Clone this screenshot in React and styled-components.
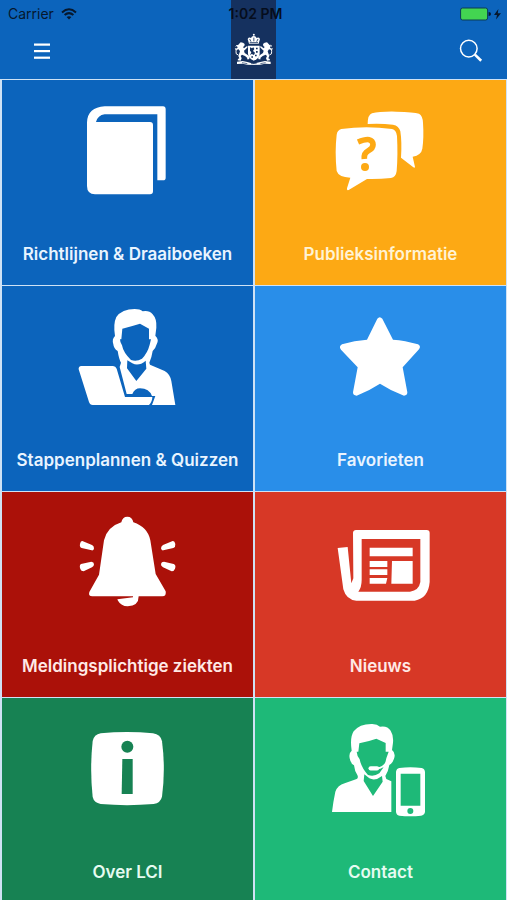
import React from "react";
import styled, { createGlobalStyle } from "styled-components";

const GlobalStyle = createGlobalStyle`
  *, *::before, *::after { box-sizing: border-box; }
  body {
    margin: 0;
    background: #cfe2f5;
    font-family: Inter, Roboto, "Liberation Sans", sans-serif;
  }
`;

const Page = styled.div`
  display: flex;
  flex-direction: column;
  min-height: 100vh;
`;

const Header = styled.header`
  display: grid;
  grid-template-columns: minmax(0, 1fr) 45px minmax(0, 1fr);
  grid-template-rows: 27px 52px;
  align-items: center;
  background: #0c64bc;
  color: #06182e;
`;

const Ribbon = styled.div`
  grid-column: 2;
  grid-row: 1 / 3;
  align-self: stretch;
  display: flex;
  align-items: flex-end;
  justify-content: center;
  padding-bottom: 13px;
  background: #15315f;
`;

const Carrier = styled.div`
  grid-column: 1;
  grid-row: 1;
  display: flex;
  align-items: center;
  gap: 7px;
  padding-left: 8px;
  font-size: 14px;
  line-height: 20px;
`;

const Time = styled.time`
  grid-column: 2;
  grid-row: 1;
  justify-self: center;
  padding-left: 4px;
  white-space: nowrap;
  font-size: 14px;
  font-weight: 600;
  line-height: 20px;
  color: #050d1c;
`;

const Battery = styled.div`
  grid-column: 3;
  grid-row: 1;
  justify-self: end;
  display: flex;
  padding-right: 5px;
`;

const BarButton = styled.button`
  grid-column: ${(p) => (p.$end ? 3 : 1)};
  grid-row: 2;
  align-self: start;
  justify-self: ${(p) => (p.$end ? "end" : "start")};
  display: flex;
  align-items: center;
  justify-content: center;
  width: 44px;
  height: 48px;
  margin: 0 ${(p) => (p.$end ? "14px" : "20px")};
  padding: 0;
  border: 0;
  background: transparent;
  color: #fff;
  cursor: pointer;
`;

const Tiles = styled.nav`
  flex: 1;
  display: grid;
  grid-template-columns: repeat(2, minmax(0, 1fr));
  grid-template-rows: repeat(3, 205px) minmax(202px, 1fr);
  gap: 1px 2px;
  padding: 1px 1px 0 2px;
`;

const Tile = styled.a`
  display: flex;
  flex-direction: column;
  align-items: center;
  gap: 37px;
  padding-top: 15px;
  background: ${(p) => p.$color};
  color: #fff;
  text-decoration: none;
`;

const TileIcon = styled.svg`
  width: 110px;
  height: 110px;
  flex: none;
  fill: #fff;
`;

const Label = styled.span`
  font-size: 17px;
  font-weight: 600;
  line-height: 24px;
  white-space: nowrap;
  color: ${(p) => p.$tint || "#e9f4ff"};
`;

const WifiIcon = () => (
  <svg width="16" height="12" viewBox="0 0 16 12" fill="none" stroke="currentColor" strokeWidth="2" aria-hidden="true">
    <path d="M1 4.4Q8-1.8 15 4.4" />
    <path d="M3.6 7.1Q8 3.2 12.4 7.1" />
    <path d="M8 11.6 5.6 9.1Q8 7.2 10.4 9.1Z" fill="currentColor" stroke="none" />
  </svg>
);

const BatteryIcon = () => (
  <svg width="42" height="14" viewBox="0 0 42 14" aria-label="Battery charging" role="img">
    <rect x="0.6" y="1" width="27" height="12" rx="2" fill="#43d551" stroke="#0b3c55" />
    <path d="M28.6 5Q31 5.2 31 7T28.6 9Z" fill="#06182e" />
    <path d="M38.4 2 34 8H37L36 12.5 41 6.2H37.8Z" fill="#06182e" />
  </svg>
);

const MenuIcon = () => (
  <svg width="16" height="17" viewBox="0 0 16 17" fill="currentColor" aria-hidden="true">
    <rect y="0.5" width="16" height="2.2" />
    <rect y="7" width="16" height="2.2" />
    <rect y="13.6" width="16" height="2.2" />
  </svg>
);

const SearchIcon = () => (
  <svg width="24" height="24" viewBox="0 0 24 24" fill="none" stroke="currentColor" aria-hidden="true">
    <circle cx="9.8" cy="9.6" r="8.3" strokeWidth="1.5" />
    <path d="m15.9 15.6 6.3 6.2" strokeWidth="2.6" />
  </svg>
);

const Lion = () => (
  <>
    <path d="M40 134l5-5 7 1 5 4-1 6-4 3 3 4 8-6 4 1-7 8-5 4 2 7 8 5 7 9-2 5h-6l1-4-7-6-9-4-4 4 3 7-3 7-9-1 1-4 4-2-3-7 3-8 2-6-4-6-7 2-3-3 7-4-2-4z" />
    <path d="M38 167q-9-2-7-10 2-5-2-10" fill="none" stroke="#fff" strokeWidth="3" />
    <path d="M43 142l-9-4-4 3M63 168l8 4" fill="none" stroke="#fff" strokeWidth="3" />
  </>
);

const CoatOfArms = () => (
  <svg width="40" height="33" viewBox="25 101 120 99" fill="#fff" role="img" aria-label="Rijksoverheid">
    <Lion />
    <g transform="translate(169 0) scale(-1 1)">
      <Lion />
    </g>
    <path d="M67 139h35v25q-2 14-17.500 20Q69 178 67 164z" />
    <path d="M73 144l6 3 4-3 3 5-4 6 6 5-3 7-7-3-5 4 4-9-4-5zM91 145h5v5h-5zM91 155h5v5h-5zM88 166h5v5h-5zM77 171h5v4h-5z" fill="#15315f" />
    <path d="M70 133l-4-14q4-7 10-3 2-6 8-6t9 6q6-4 10 3l-4 14z" />
    <path d="M72 119l4 8M84.500 115v11M97 119l-4 8M72 130h25" fill="none" stroke="#15315f" strokeWidth="2.500" />
    <circle cx="84.500" cy="106" r="3" />
    <path d="M34 187l17-2 14 3 19 5 20-5 14-3 17 2v7l-17-1-14 3-20 1-19-1-14-3-17 1z" />
    <path d="M49 190l16 3M120 190l-16 3M76 193h17" fill="none" stroke="#15315f" strokeWidth="2" />
  </svg>
);

const BookIcon = () => (
  <TileIcon viewBox="10 0 330 330" aria-hidden="true">
    <path d="M52 82Q54 37 105 34H280Q288 34 288 43V248Q288 256 280 256H263V58H105Q84 61 79 81H241Q250 81 250 90V289Q250 298 241 298H76Q52 297 52 273Z" />
  </TileIcon>
);

const QuestionIcon = () => (
  <TileIcon viewBox="4 -15 330 330" aria-hidden="true">
    <path d="M129 72Q129 44 142 40Q165 34 215 35Q268 36 283 41Q294 47 295 68Q298 112 293 146Q290 165 264 170L271 201Q270 205 266 202L229 173Q232 125 227 94Q223 77 205 74Q170 70 129 72Z" />
    <path d="M50 87Q125 76 202 87Q215 90 217 108Q220 165 216 213Q214 231 199 234Q162 238 127 237L72 270Q65 272 67 265L77 233Q42 232 36 213Q30 155 36 104Q38 90 50 87Z" />
    <path d="M100 126Q144 108 145 134Q145 145 131 152Q117 159 119 177" fill="none" stroke="#fda914" strokeWidth="17" />
    <circle cx="121" cy="201" r="12" fill="#fda914" />
  </TileIcon>
);

const LaptopIcon = () => (
  <TileIcon viewBox="10 3 330 330" aria-hidden="true">
    <path fillRule="evenodd" d="M136 108Q130 72 140 51Q157 27 195 27Q211 27 219 34Q238 30 249 43Q262 57 260 83L257 107Q269 118 261 133Q258 145 249 153Q246 173 239 188L241 194L285 213Q301 222 305 243L317 315H247L257 288H247Q239 266 211 265Q195 265 188 282H171L150 201L154 188Q148 178 144 153Q132 146 131 133Q126 117 136 108ZM158 86L155 118H151Q151 127 157 136Q161 158 184 180Q201 186 217 176Q234 158 240 134L244 118H238V86L211 71Q185 79 158 86ZM173 181L172 205L200 243L230 206L228 182Q207 200 188 190Z" />
    <path d="M35 198H130Q138 198 141 206L166 291H248Q248 305 238 315H69Q61 315 58 306L27 208Q26 199 35 198Z" />
  </TileIcon>
);

const StarIcon = () => (
  <TileIcon viewBox="-11 -12 330 330" aria-hidden="true">
    <path d="M143 41Q150 32 158 41L190 104Q226 106 265 118Q275 124 268 133L219 187L233 262Q233 272 223 272Q183 257 151 236Q119 257 81 272Q70 272 70 262L84 187L34 134Q26 125 37 118Q75 106 112 104Z" />
  </TileIcon>
);

const BellIcon = () => (
  <TileIcon viewBox="10 6 330 330" aria-hidden="true">
    <path d="M155 52Q158 35 173 35T191 52Q234 66 242 106L258 207L288 259Q291 274 278 274H207Q207 303 174 304Q154 303 145 287L143 283L190 277V274H68Q55 274 59 261L88 209L103 106Q113 65 155 52Z" />
    <path d="M38 108L67 120Q73 123 73 130Q73 137 66 136L36 129Q29 126 31 117Q33 107 38 108ZM34 177L65 170Q73 171 73 178Q73 184 67 187L42 199Q34 199 32 192Q28 181 34 177ZM309 108L280 120Q274 124 274 130Q275 137 281 136L311 129Q318 126 317 117Q315 107 309 108ZM312 177L283 170Q275 170 274 177Q273 183 280 187L306 199Q313 199 316 191Q320 181 312 177Z" />
  </TileIcon>
);

const NewsIcon = () => (
  <TileIcon viewBox="-11 -24 330 330" aria-hidden="true">
    <path fillRule="evenodd" d="M70 53Q71 45 79 45H291Q300 45 300 54V201Q296 250 255 257H80Q50 255 41 223L24 99L54 96L65 205L71 190ZM96 72V195Q96 217 86 230H241Q268 226 272 201V72Z" />
    <path d="M120 98H249V124H120ZM120 138H173V156H120ZM120 163H173V180H120ZM120 189H173L169 206H120ZM187 138H249V206H185Z" />
  </TileIcon>
);

const InfoIcon = () => (
  <TileIcon viewBox="-20 -20 330 330" aria-hidden="true">
    <path d="M63 41Q142 33 220 41Q243 44 247 65Q258 148 247 231Q243 249 222 253Q142 260 63 253Q43 249 39 232Q30 148 39 64Q43 45 63 41Z" />
    <circle cx="143" cy="81" r="18" fill="#178253" />
    <path d="M128 118H159V223H126Z" fill="#178253" />
  </TileIcon>
);

const ContactIcon = () => (
  <TileIcon viewBox="4 -6 330 330" aria-hidden="true">
    <path fillRule="evenodd" d="M81 107Q75 67 87 49Q105 26 143 27Q158 28 166 35Q188 31 198 47Q207 61 205 83L202 105Q214 114 208 131Q204 144 194 150Q191 169 182 183L185 192L200 199V291H22Q25 263 32 230Q39 211 60 205L96 192Q102 188 98 180Q90 169 88 151Q77 145 75 130Q72 114 81 107ZM104 85L101 110H96Q97 123 105 133Q110 158 130 180Q148 186 164 175Q180 157 185 130L192 110H183V84L155 71Q129 80 104 85ZM119 178L117 198L145 243L174 200L172 183Q152 199 134 190Z" />
    <path d="M138 160H157" fill="none" stroke="#fff" strokeWidth="13" strokeLinecap="round" />
    <path d="M157 160Q177 160 189 138" fill="none" stroke="#fff" strokeWidth="6" />
    <path fillRule="evenodd" d="M224 159Q257 154 291 159Q300 161 301 171V291Q299 301 289 302Q257 305 224 302Q215 300 214 291V171Q215 161 224 159ZM228 176V272H287V176Z" />
    <circle cx="257" cy="288" r="9" fill="#1eb978" />
  </TileIcon>
);

const tiles = [
  { id: "richtlijnen", label: "Richtlijnen & Draaiboeken", color: "#0c64bc", Icon: BookIcon },
  { id: "publiek", label: "Publieksinformatie", color: "#fda914", tint: "#fff3d4", Icon: QuestionIcon },
  { id: "stappenplannen", label: "Stappenplannen & Quizzen", color: "#0c64bc", Icon: LaptopIcon },
  { id: "favorieten", label: "Favorieten", color: "#298ee9", Icon: StarIcon },
  { id: "meldingen", label: "Meldingsplichtige ziekten", color: "#ab1109", tint: "#ffe9e6", Icon: BellIcon },
  { id: "nieuws", label: "Nieuws", color: "#d73826", tint: "#ffe9e6", Icon: NewsIcon },
  { id: "over", label: "Over LCI", color: "#178253", tint: "#e6fbf1", Icon: InfoIcon },
  { id: "contact", label: "Contact", color: "#1eb978", tint: "#e6fbf1", Icon: ContactIcon },
];

export default function App() {
  return (
    <Page>
      <GlobalStyle />
      <Header>
        <Ribbon>
          <CoatOfArms />
        </Ribbon>
        <Carrier>
          Carrier
          <WifiIcon />
        </Carrier>
        <Time>1:02 PM</Time>
        <Battery>
          <BatteryIcon />
        </Battery>
        <BarButton type="button" aria-label="Menu">
          <MenuIcon />
        </BarButton>
        <BarButton type="button" aria-label="Zoeken" $end>
          <SearchIcon />
        </BarButton>
      </Header>
      <Tiles>
        {tiles.map(({ id, label, color, tint, Icon }) => (
          <Tile key={id} href={`#${id}`} $color={color}>
            <Icon />
            <Label $tint={tint}>{label}</Label>
          </Tile>
        ))}
      </Tiles>
    </Page>
  );
}
